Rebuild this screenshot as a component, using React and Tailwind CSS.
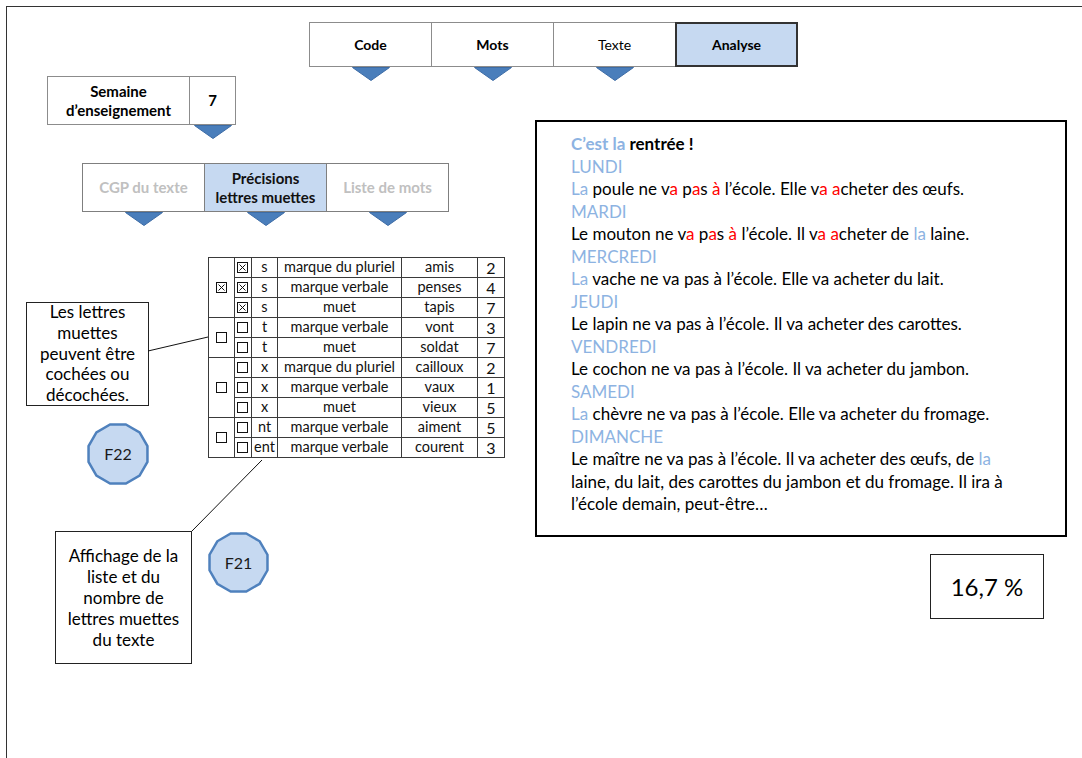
const BLUE_FILL = '#c6d9f1';

function Tri() {
  return (
    <svg width="38" height="14" viewBox="0 0 38 14" className="block">
      <polygon points="0.5,0.5 37.5,0.5 19,13.5" fill="#4a7ebb" stroke="#3d6ca5" strokeWidth="1" />
    </svg>
  );
}

function Badge({ label, size }) {
  const n = 12;
  const c = size / 2;
  const r = size / 2 - 1.5;
  const pts = Array.from({ length: n }, (_, i) => {
    const a = -Math.PI / 2 + Math.PI / n + (2 * Math.PI * i) / n;
    return `${(c + r * Math.cos(a)).toFixed(2)},${(c + r * Math.sin(a)).toFixed(2)}`;
  }).join(' ');
  return (
    <div className="relative" style={{ width: size, height: size }}>
      <svg width={size} height={size} className="block">
        <polygon points={pts} fill={BLUE_FILL} stroke="#4f81bd" strokeWidth="2.5" />
      </svg>
      <span className="absolute inset-0 flex items-center justify-center text-[16px] text-[#1a1a1a]">{label}</span>
    </div>
  );
}

function Box({ checked }) {
  return (
    <svg width="11" height="11" viewBox="0 0 11 11" className="block">
      <rect x="0.5" y="0.5" width="10" height="10" fill="white" stroke="#111" strokeWidth="1" />
      {checked && <path d="M2.5 2.5 L8.5 8.5 M8.5 2.5 L2.5 8.5" stroke="#111" strokeWidth="1" />}
    </svg>
  );
}

const groups = [
  { checked: true, rows: [['s', 'marque du pluriel', 'amis', 2], ['s', 'marque verbale', 'penses', 4], ['s', 'muet', 'tapis', 7]] },
  { checked: false, rows: [['t', 'marque verbale', 'vont', 3], ['t', 'muet', 'soldat', 7]] },
  { checked: false, rows: [['x', 'marque du pluriel', 'cailloux', 2], ['x', 'marque verbale', 'vaux', 1], ['x', 'muet', 'vieux', 5]] },
  { checked: false, rows: [['nt', 'marque verbale', 'aiment', 5], ['ent', 'marque verbale', 'courent', 3]] },
];

function LettersTable() {
  const td = 'border border-[#3a3a3a] p-0 h-[20px] text-center align-middle';
  return (
    <table className="table-fixed border-collapse w-[296px] text-[14.5px] leading-none text-[#111]">
      <colgroup>
        <col className="w-[26px]" />
        <col className="w-[17px]" />
        <col className="w-[26px]" />
        <col className="w-[124px]" />
        <col className="w-[76px]" />
        <col className="w-[27px]" />
      </colgroup>
      <tbody>
        {groups.map((g, gi) =>
          g.rows.map((r, ri) => (
            <tr key={`${gi}-${ri}`}>
              {ri === 0 && (
                <td rowSpan={g.rows.length} className={td}>
                  <div className="flex justify-center"><Box checked={g.checked} /></div>
                </td>
              )}
              <td className={td}>
                <div className="flex pl-[2px]"><Box checked={g.checked} /></div>
              </td>
              <td className={td}>{r[0]}</td>
              <td className={td}>{r[1]}</td>
              <td className={td}>{r[2]}</td>
              <td className={`${td} text-[16px]`}>{r[3]}</td>
            </tr>
          ))
        )}
      </tbody>
    </table>
  );
}

const R = ({ children }) => <span className="text-[#ff0000]">{children}</span>;
const B = ({ children }) => <span className="text-[#8db3e2]">{children}</span>;
const Day = ({ children }) => <p className="text-[#8db3e2]">{children}</p>;

export default function App() {
  return (
    <div className="relative w-[1082px] h-[758px] bg-white overflow-hidden text-black" style={{ fontFamily: 'Lato, "Liberation Sans", sans-serif' }}>
      {/* page frame */}
      <div className="absolute left-[6px] top-[6px] right-0 bottom-0 border-l border-t border-[#333] pointer-events-none" />

      {/* main tabs */}
      <div className="absolute left-[309px] top-[22px] flex">
        {[
          ['Code', true, false],
          ['Mots', true, false],
          ['Texte', false, false],
          ['Analyse', true, true],
        ].map(([label, bold, active], i) => (
          <div key={label} className="flex flex-col items-center">
            <div
              className={`w-[123px] h-[45px] flex items-center justify-center text-[14px] ${bold ? 'font-bold' : ''} ${
                active ? 'bg-[#c6d9f1] border-2 border-[#333]' : 'border border-[#8c8c8c]'
              } ${i > 0 ? '-ml-px' : ''}`}
            >
              {label}
            </div>
            {!active && <Tri />}
          </div>
        ))}
      </div>

      {/* semaine */}
      <div className="absolute left-[47px] top-[76px] flex">
        <div className="w-[143px] h-[49px] border border-[#8c8c8c] flex items-center justify-center text-center text-[15px] font-bold leading-[19px]">
          Semaine<br />d’enseignement
        </div>
        <div className="flex flex-col items-center -ml-px">
          <div className="w-[47px] h-[49px] border border-[#8c8c8c] flex items-center justify-center text-[15px] font-bold">7</div>
          <Tri />
        </div>
      </div>

      {/* sub tabs */}
      <div className="absolute left-[82px] top-[163px] flex">
        {[
          ['CGP du texte', false],
          ['Précisions lettres muettes', true],
          ['Liste de mots', false],
        ].map(([label, active], i) => (
          <div key={label} className={`flex flex-col items-center ${i > 0 ? '-ml-px' : ''}`}>
            <div
              className={`w-[123px] h-[49px] border border-[#7f7f7f] flex items-center justify-center text-center text-[15px] font-bold leading-[19px] px-1 ${
                active ? 'bg-[#c6d9f1] text-[#111]' : 'text-[#c0c0c0]'
              }`}
            >
              {active ? (
                <span>Précisions<br />lettres muettes</span>
              ) : (
                label
              )}
            </div>
            <Tri />
          </div>
        ))}
      </div>

      {/* table */}
      <div className="absolute left-[208px] top-[257px]">
        <LettersTable />
      </div>

      {/* callout 1 */}
      <div className="absolute left-[26px] top-[302px] w-[123px] h-[104px] border border-[#222] flex items-center justify-center text-center text-[17px] leading-[20.8px]">
        Les lettres<br />muettes<br />peuvent être<br />cochées ou<br />décochées.
      </div>

      <div className="absolute left-[86px] top-[422px]">
        <Badge label="F22" size={64} />
      </div>

      {/* callout 2 */}
      <div className="absolute left-[55px] top-[531px] w-[137px] h-[133px] border border-[#222] flex items-center justify-center text-center text-[17px] leading-[21px]">
        Affichage de la<br />liste et du<br />nombre de<br />lettres muettes<br />du texte
      </div>

      <div className="absolute left-[207px] top-[531px]">
        <Badge label="F21" size={63} />
      </div>

      {/* connector lines */}
      <svg className="absolute inset-0 pointer-events-none" width="1082" height="758">
        <line x1="148" y1="351" x2="208" y2="337" stroke="#111" strokeWidth="1" />
        <line x1="192" y1="531" x2="262" y2="460" stroke="#111" strokeWidth="1" />
      </svg>

      {/* text panel */}
      <div className="absolute left-[535px] top-[120px] w-[532px] h-[417px] border-2 border-black pl-[34px] pt-[11px] text-[17px] leading-[22.5px]">
        <p className="font-bold"><B>C’est la</B> rentrée !</p>
        <Day>LUNDI</Day>
        <p><B>La</B> poule ne v<R>a</R> p<R>a</R>s <R>à</R> l’école. Elle v<R>a</R> <R>a</R>cheter des œufs.</p>
        <Day>MARDI</Day>
        <p>Le mouton ne v<R>a</R> p<R>a</R>s <R>à</R> l’école. Il v<R>a</R> <R>a</R>cheter de <B>la</B> laine.</p>
        <Day>MERCREDI</Day>
        <p><B>La</B> vache ne va pas à l’école. Elle va acheter du lait.</p>
        <Day>JEUDI</Day>
        <p>Le lapin ne va pas à l’école. Il va acheter des carottes.</p>
        <Day>VENDREDI</Day>
        <p>Le cochon ne va pas à l’école. Il va acheter du jambon.</p>
        <Day>SAMEDI</Day>
        <p><B>La</B> chèvre ne va pas à l’école. Elle va acheter du fromage.</p>
        <Day>DIMANCHE</Day>
        <p>
          Le maître ne va pas à l’école. Il va acheter des œufs, de <B>la</B>
          <br />laine, du lait, des carottes du jambon et du fromage. Il ira à
          <br />l’école demain, peut-être…
        </p>
      </div>

      {/* percentage */}
      <div className="absolute left-[930px] top-[554px] w-[114px] h-[65px] border border-[#222] flex items-center justify-center text-[24px]">
        16,7 %
      </div>
    </div>
  );
}
